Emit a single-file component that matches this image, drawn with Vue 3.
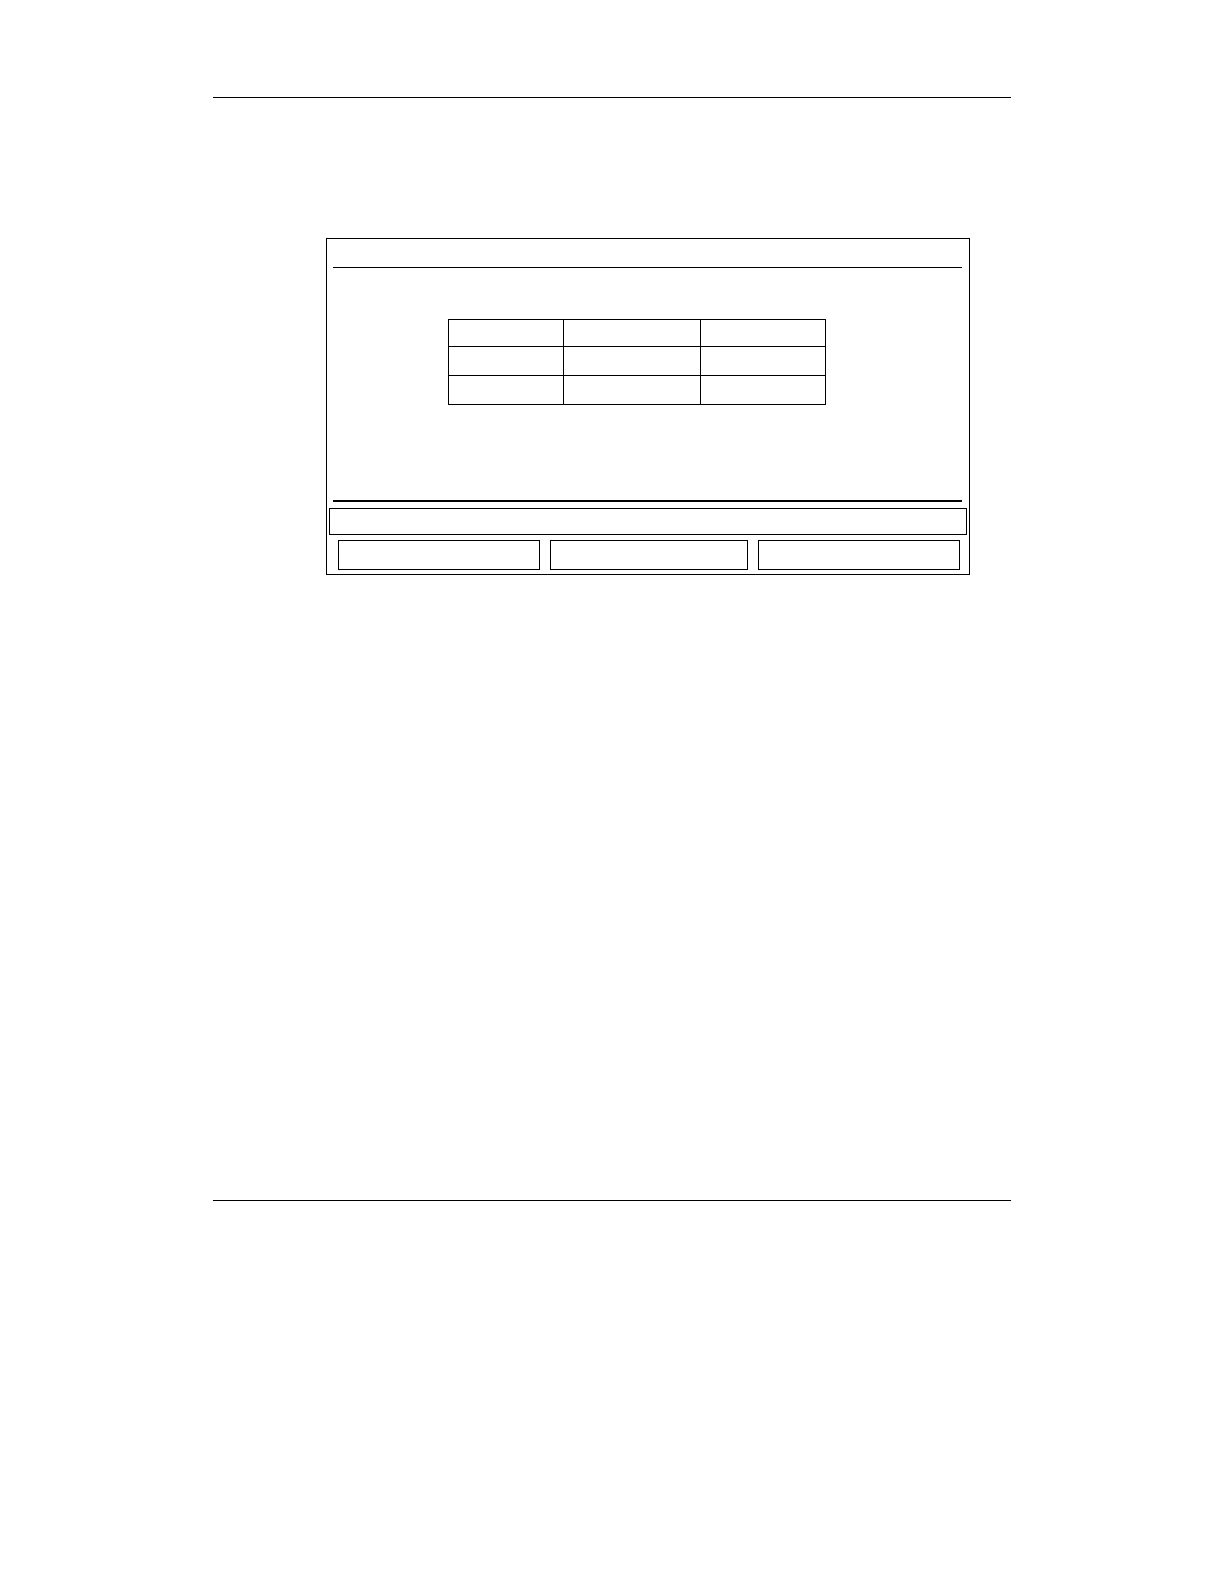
<template>
  <div class="page">
    <header class="page-header"></header>

    <main class="page-body">
      <section class="screen">
        <!-- Title bar -->
        <div class="screen-title"></div>

        <!-- Work area -->
        <div class="screen-content">
          <table class="data-table">
            <colgroup>
              <col class="col-first" />
              <col class="col-second" />
              <col />
            </colgroup>
            <thead>
              <tr>
                <th v-for="col in columns" :key="col" scope="col"></th>
              </tr>
            </thead>
            <tbody>
              <tr v-for="row in rows" :key="row">
                <td v-for="col in columns" :key="col"></td>
              </tr>
            </tbody>
          </table>
        </div>

        <!-- Message line -->
        <div class="message-line" role="status"></div>

        <!-- Soft keys -->
        <div class="soft-keys">
          <button
            v-for="key in softKeys"
            :key="key"
            type="button"
            class="soft-key"
            :aria-label="key"
          ></button>
        </div>
      </section>
    </main>

    <footer class="page-footer"></footer>
  </div>
</template>

<script setup>
const columns = 3;
const rows = 2;
const softKeys = ['Left key', 'Middle key', 'Right key'];
</script>

<style>
body {
  margin: 0;
  background: #ffffff;
}
</style>

<style scoped>
.page {
  display: flex;
  flex-direction: column;
  min-height: 100vh;
  padding: 0 213px;
  box-sizing: border-box;
  font-family: 'Liberation Sans', Arial, sans-serif;
  font-size: 14px;
  color: #000000;
}

.page-header {
  height: 97px;
  border-bottom: 1px solid #000000;
}

.page-body {
  flex: 1;
  padding: 140px 41px 0 113px;
}

.page-footer {
  height: 383px;
  border-top: 1px solid #000000;
}

/* Device screen */
.screen {
  border: 1px solid #000000;
  padding-bottom: 4px;
}

.screen-title {
  height: 28px;
  margin: 0 7px 0 6px;
  border-bottom: 1px solid #000000;
}

.screen-content {
  margin: 0 7px 0 6px;
  padding: 51px 136px 95px 115px;
  border-bottom: 2px solid #000000;
}

/* Table */
.data-table {
  width: 100%;
  table-layout: fixed;
  border-collapse: separate;
  border-spacing: 0;
  border: solid #000000;
  border-width: 1px 0 0 1px;
}

.col-first {
  width: 115px;
}

.col-second {
  width: 137px;
}

.data-table th,
.data-table td {
  height: 29px;
  padding: 0;
  box-sizing: border-box;
  border: solid #000000;
  border-width: 0 1px 1px 0;
}

.data-table th {
  height: 27px;
}

.message-line {
  height: 25px;
  margin: 6px 2px 5px;
  border: 1px solid #000000;
}

/* Soft keys */
.soft-keys {
  display: grid;
  grid-template-columns: 202fr 198fr 202fr;
  gap: 10px;
  padding: 0 9px 0 11px;
}

.soft-key {
  height: 30px;
  padding: 0;
  background: transparent;
  border: 1px solid #000000;
  border-radius: 0;
  cursor: pointer;
}
</style>
